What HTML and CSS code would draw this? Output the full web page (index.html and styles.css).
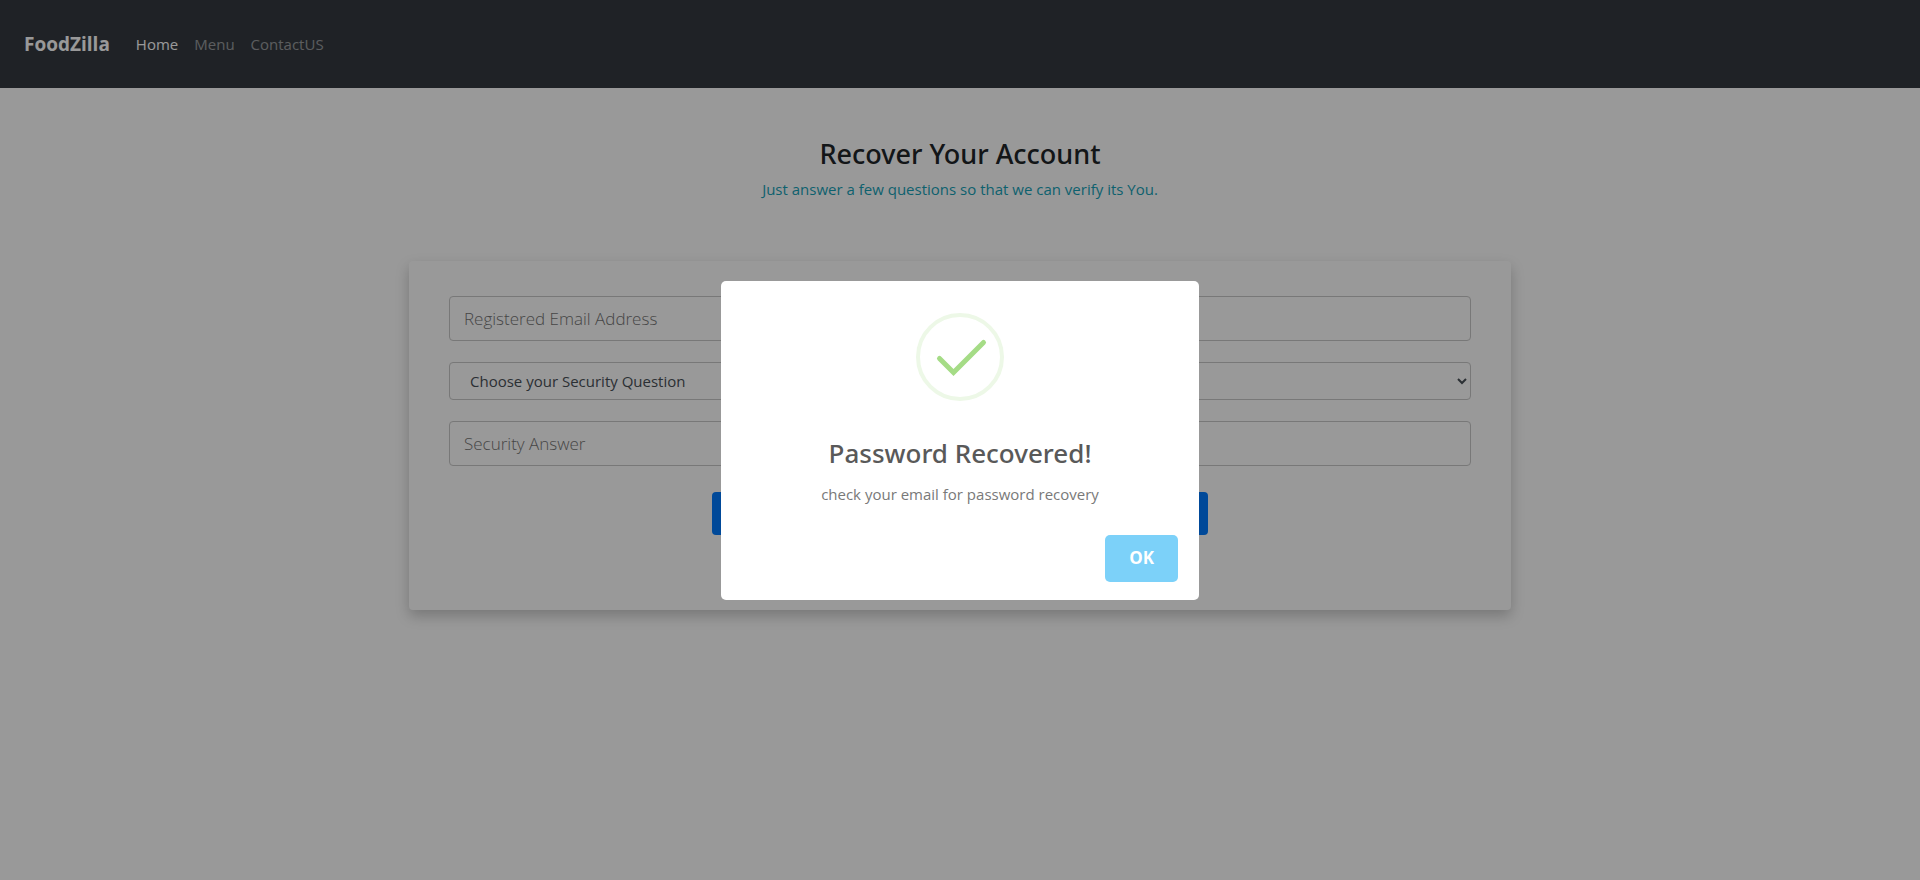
FILE: index.html
```html
<!DOCTYPE html>
<html lang="en">
<head>
<meta charset="utf-8">
<meta name="viewport" content="width=device-width, initial-scale=1">
<title>FoodZilla - Recover Your Account</title>
<link rel="stylesheet" href="styles.css">
</head>
<body>
<nav class="navbar">
  <a class="brand" href="#">FoodZilla</a>
  <a class="nav-link active" href="#">Home</a>
  <a class="nav-link" href="#">Menu</a>
  <a class="nav-link" href="#">ContactUS</a>
</nav>
<main class="page">
  <header class="intro">
    <h1 class="title">Recover Your Account</h1>
    <p class="subtitle">Just answer a few questions so that we can verify its You.</p>
  </header>
  <form class="card">
    <input class="field" type="email" placeholder="Registered Email Address" aria-label="Registered Email Address">
    <select class="field select" aria-label="Security question">
      <option>Choose your Security Question</option>
    </select>
    <input class="field" type="text" placeholder="Security Answer" aria-label="Security Answer">
    <button class="submit" type="button" aria-label="Submit"></button>
  </form>
</main>
<div class="overlay">
  <div class="modal" role="dialog" aria-modal="true" aria-labelledby="modal-title" aria-describedby="modal-text">
    <svg class="modal-icon" viewBox="0 0 88 88" aria-hidden="true">
      <circle cx="44" cy="44" r="42" fill="none" stroke="#edf8e7" stroke-width="4"/>
      <path d="M23.5 45.5 L37.5 59.5 L67.5 29.5" fill="none" stroke="#a5dc86" stroke-width="5" stroke-linecap="round"/>
    </svg>
    <h2 class="modal-title" id="modal-title">Password Recovered!</h2>
    <p class="modal-text" id="modal-text">check your email for password recovery</p>
    <div class="modal-footer">
      <button class="ok" type="button">OK</button>
    </div>
  </div>
</div>
</body>
</html>
```
FILE: styles.css
```css
* {
  box-sizing: border-box;
}

body {
  margin: 0;
  background: #fff;
  color: #212529;
  font-family: "Open Sans", "Noto Sans", sans-serif;
  font-size: 15px;
  line-height: 24px;
}

.navbar {
  display: flex;
  align-items: center;
  gap: 16px;
  padding: 24px;
  background: #343a40;
}

.brand {
  margin-right: 10px;
  color: #fff;
  font-size: 19px;
  font-weight: 700;
  line-height: 40px;
  text-decoration: none;
}

.nav-link {
  color: rgba(255, 255, 255, 0.5);
  text-decoration: none;
}

.nav-link.active {
  color: #fff;
}

.page {
  padding: 48px 24px;
}

.intro {
  text-align: center;
}

.title {
  margin: 0 0 5px;
  font-family: "Noto Sans", sans-serif;
  font-size: 27px;
  font-weight: 500;
  line-height: 36px;
}

.subtitle {
  margin: 0;
  color: #17a2b8;
}

.card {
  display: flex;
  flex-direction: column;
  align-items: center;
  gap: 21px;
  max-width: 1102px;
  margin: 60px auto 0;
  padding: 35px 40px 75px;
  border-radius: 4px;
  background: #fff;
  box-shadow: 0 6px 14px rgba(0, 0, 0, 0.22);
}

.field {
  width: 100%;
  height: 45px;
  padding: 8px 14px;
  border: 1px solid #c8c8c8;
  border-radius: 4px;
  background: #fff;
  color: #495057;
  font: inherit;
}

.field::placeholder {
  color: #757575;
  font-size: 17px;
  font-weight: 300;
  opacity: 1;
}

.select {
  height: 38px;
  padding: 6px 0 6px 16px;
}

.submit {
  width: 496px;
  max-width: 100%;
  height: 43px;
  margin-top: 5px;
  border: 0;
  border-radius: 4px;
  background: #007bff;
}

.overlay {
  position: fixed;
  inset: 0;
  display: flex;
  align-items: center;
  justify-content: center;
  background: rgba(0, 0, 0, 0.4);
}

.modal {
  display: flex;
  flex-direction: column;
  align-items: center;
  width: 478px;
  max-width: 100%;
  padding: 32px 21px 18px;
  border-radius: 5px;
  background: #fff;
}

.modal-icon {
  width: 88px;
  height: 88px;
}

.modal-title {
  margin: 34px 0 11px;
  color: #595959;
  font-family: "Noto Sans", sans-serif;
  font-size: 26px;
  font-weight: 500;
  line-height: 36px;
}

.modal-text {
  margin: 0 0 29px;
  color: #797979;
  font-size: 15px;
  line-height: 24px;
}

.modal-footer {
  align-self: stretch;
  text-align: right;
}

.ok {
  display: inline-block;
  height: 47px;
  padding: 0 24px;
  border: 0;
  border-radius: 5px;
  background: #7cd1f9;
  color: #fff;
  font: inherit;
  font-size: 17px;
  font-weight: 700;
  vertical-align: top;
}
```
